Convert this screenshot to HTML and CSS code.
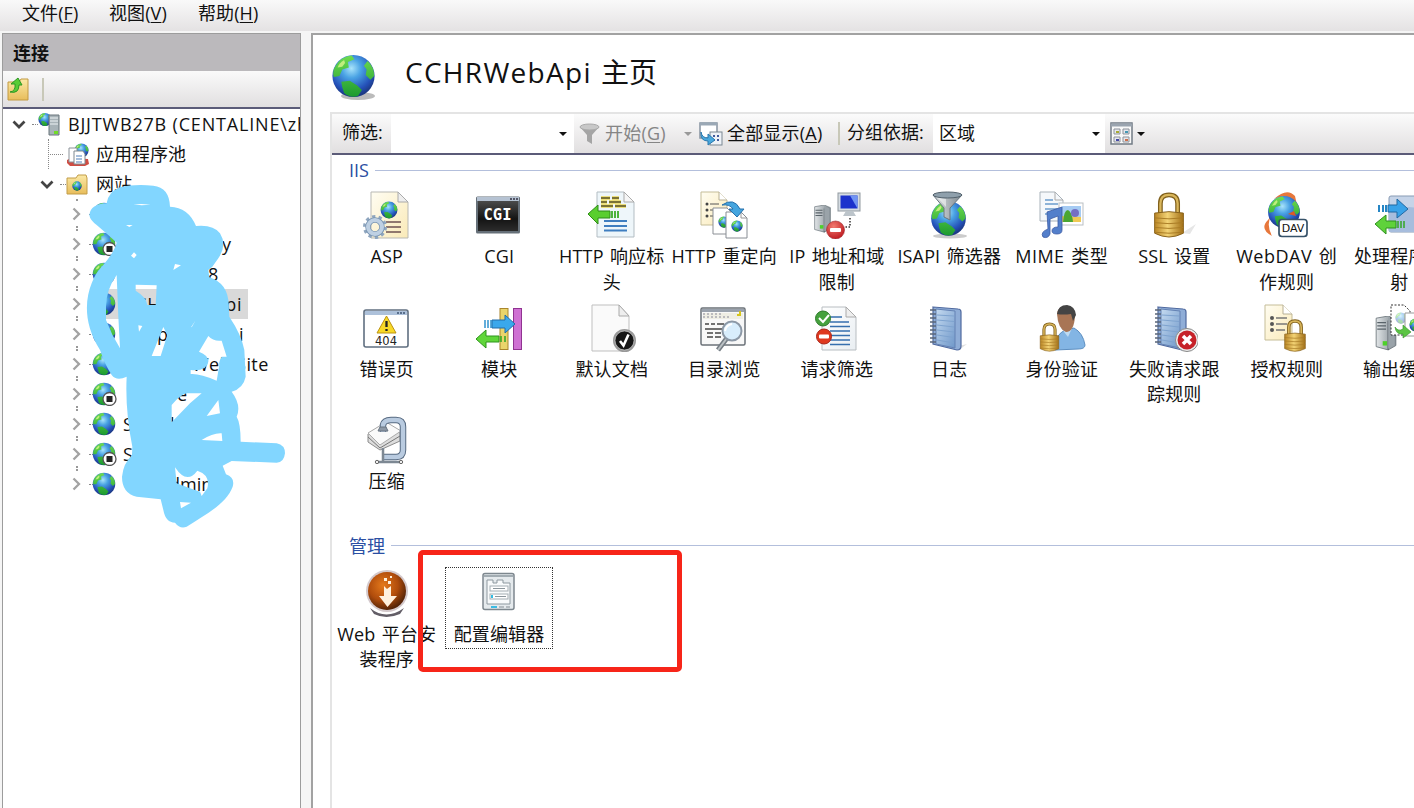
FILE: index.html
```html
<!DOCTYPE html>
<html lang="zh-CN">
<head>
<meta charset="utf-8">
<title>CCHRWebApi 主页</title>
<link rel="stylesheet" href="styles.css">
</head>
<body>
<svg class="sprite" width="0" height="0" aria-hidden="true">
  <defs>
    <radialGradient id="sea" cx=".45" cy=".32" r=".65"><stop offset="0" stop-color="#a9e4fa"/><stop offset=".35" stop-color="#4aa3e4"/><stop offset=".8" stop-color="#2450b8"/><stop offset="1" stop-color="#1d3a86"/></radialGradient>
    <linearGradient id="land" x1="0" y1="0" x2="0" y2="1"><stop offset="0" stop-color="#6fdc50"/><stop offset="1" stop-color="#1c9a30"/></linearGradient>
    <linearGradient id="gold" x1="0" y1="0" x2="1" y2="0"><stop offset="0" stop-color="#b98524"/><stop offset=".45" stop-color="#f3d375"/><stop offset="1" stop-color="#a26f16"/></linearGradient>
    <linearGradient id="steel" x1="0" y1="0" x2="1" y2="0"><stop offset="0" stop-color="#e2e6e8"/><stop offset="1" stop-color="#7d878e"/></linearGradient>
    <linearGradient id="paper" x1="0" y1="0" x2="1" y2="1"><stop offset="0" stop-color="#ffffff"/><stop offset="1" stop-color="#e9eef2"/></linearGradient>
    <linearGradient id="cream" x1="0" y1="0" x2="1" y2="1"><stop offset="0" stop-color="#fffdf2"/><stop offset="1" stop-color="#faeab8"/></linearGradient>
    <linearGradient id="folder" x1="0" y1="0" x2="0" y2="1"><stop offset="0" stop-color="#fbe9a6"/><stop offset="1" stop-color="#e8bd5b"/></linearGradient>
    <linearGradient id="dark" x1="0" y1="0" x2="0" y2="1"><stop offset="0" stop-color="#4a4a4a"/><stop offset=".6" stop-color="#141414"/><stop offset="1" stop-color="#2c2c2c"/></linearGradient>
    <linearGradient id="book" x1="0" y1="0" x2="1" y2="1"><stop offset="0" stop-color="#c4daf0"/><stop offset="1" stop-color="#6f97c9"/></linearGradient>
    <radialGradient id="red" cx=".4" cy=".3" r=".7"><stop offset="0" stop-color="#f27b70"/><stop offset="1" stop-color="#c01d22"/></radialGradient>
    <radialGradient id="orange" cx=".4" cy=".35" r=".65"><stop offset="0" stop-color="#e57a1c"/><stop offset=".6" stop-color="#b04c0c"/><stop offset="1" stop-color="#562508"/></radialGradient>
  </defs>

  <symbol id="globe" viewBox="0 0 48 48">
    <circle cx="24" cy="24" r="22.5" fill="url(#sea)"/>
    <path d="M5 13Q11 3 22 2l3 4-7 3 1 6-7 2-3 7-6 1Q1 19 5 13zM39 8q7 6 7 16l-4 4-5-5 1-6-3-4zM11 30l9-1 8 5 5 5-4 6q-8 3-15-3l-2-6z" fill="url(#land)"/>
    <path d="M14 7q-5 3-7 8l5-1 3-4z" fill="#d9f58a" opacity=".8"/>
  </symbol>

  <symbol id="lock" viewBox="0 0 34 48">
    <path d="M8 25V12q0-9 9-9t9 9v13" fill="none" stroke="#80601c" stroke-width="5"/>
    <path d="M8 25V12q0-9 9-9t9 9v13" fill="none" stroke="#d9b65b" stroke-width="2.4"/>
    <path d="M2 22l15-1.500 15 1.500v21q-8 4-15 4T2 43z" fill="url(#gold)" stroke="#86601a"/>
    <path d="M2 27l15 1 15-1M2 32l15 1 15-1M2 37l15 1 15-1M2 42l15 1 15-1" fill="none" stroke="#a87a24"/>
  </symbol>

  <symbol id="tower" viewBox="0 0 20 32">
    <path d="M1 2L12 0l7 3v24l-7 4L1 28z" fill="url(#steel)" stroke="#6f787e" stroke-width=".8"/>
    <path d="M12 4v27M2 6h8M2 9h8M2 12h8" fill="none" stroke="#59636a" stroke-width="1.200"/>
    <path d="M12 1l6 3v23l-6 3z" fill="#9aa3a9"/>
    <rect x="7" y="23" width="4" height="4" fill="#4ed02a"/>
  </symbol>

  <symbol id="notebook" viewBox="0 0 48 48">
    <path d="M30 43l12-3-8 6z" fill="#ccc" opacity=".6"/>
    <path d="M8 3l25 2q3 0 3 3v34q0 4-4 4L8 40z" fill="#8fadd7" stroke="#506a9f" stroke-width="1.200"/>
    <path d="M11 5l19 2v37l-19-4z" fill="url(#book)" stroke="#6482b4"/>
    <path d="M12 11l17 1M12 16l17 1.500M12 21l17 2M12 26l17 2M12 31l17 2.500M12 36l17 3" stroke="#7ea3cf"/>
    <path d="M5 6h6M5 10h6M5 14h6M5 18h6M5 22h6M5 26h6M5 30h6M5 34h6M5 38h6" stroke="#5a6578" stroke-width="1.500"/>
  </symbol>

  <symbol id="asp" viewBox="0 0 48 48">
    <path d="M8 1h27l10 10v36H8z" fill="url(#cream)" stroke="#b9b9b4"/><path d="M35 1v10h10z" fill="#eee" stroke="#aaa"/>
    <use href="#globe" x="17" y="10" width="18" height="18"/>
    <path d="M23 31h15M23 36h15M23 41h15" stroke="#6d5252" stroke-width="1.600"/>
    <circle cx="12" cy="36" r="10.500" fill="none" stroke="#8fa6bf" stroke-width="3" stroke-dasharray="3.300 3.300"/>
    <circle cx="12" cy="36" r="7" fill="none" stroke="#7793b1" stroke-width="5.500"/><circle cx="12" cy="36" r="7" fill="none" stroke="#bed0e3" stroke-width="4"/>
  </symbol>

  <symbol id="cgi" viewBox="0 0 48 48">
    <rect x="1" y="5.500" width="44" height="37" rx="1.500" fill="#667079"/><rect x="2" y="6" width="42" height="4" fill="#b5c2d2"/><path d="M35 8h8" stroke="#334" stroke-width="1.500" stroke-dasharray="2 1"/>
    <rect x="3" y="10" width="40" height="30" fill="url(#dark)"/>
    <text x="22.500" y="29" text-anchor="middle" class="cgi-text">CGI</text>
  </symbol>

  <symbol id="headers" viewBox="0 0 48 48">
    <path d="M9 1h27l10 10v35H9z" fill="#eef6fa" stroke="#b3bdc3"/><path d="M36 1v10h10z" fill="#f6f6f6" stroke="#aaa"/>
    <path d="M13 7h9m2 0h7M13 11h6m2 0h12M13 15h12m2 0h11" stroke="#ecdf7c" stroke-width="4"/><path d="M13 7h9m2 0h7M13 11h6m2 0h12M13 15h12m2 0h11" stroke="#55501f" stroke-width="1.400"/>
    <path d="M0 23l10-9v6h12v7H10v6z" fill="#5ace2f" stroke="#2f8c19"/><path d="M24 20v7M27 20v7M30 20v7" stroke="#32a91d" stroke-width="1.700"/>
    <path d="M16 30h23M16 35h23M16 39.500h23" stroke="#3f7ec0" stroke-width="1.800"/>
  </symbol>

  <symbol id="redirect" viewBox="0 0 48 48">
    <path d="M1 1h18l8 8v25H1z" fill="url(#cream)" stroke="#c5bd98"/><path d="M19 1v8h8" fill="#fff" stroke="#b8b095"/>
    <path d="M10 13h9M10 19h5M10 25h3" stroke="#555"/><circle cx="7" cy="13" r="1.500" fill="#444"/><circle cx="7" cy="19" r="1.500" fill="#444"/><circle cx="7" cy="25" r="1.500" fill="#444"/>
    <path d="M13 17h14l6 6v20H13z" fill="#fff" stroke="#8b8f95"/><use href="#globe" x="18" y="25" width="12" height="12"/>
    <path d="M26 21h15l6 6v20H26z" fill="#fff" stroke="#888d94"/><path d="M41 21v6h6" fill="none" stroke="#999"/><use href="#globe" x="31" y="29" width="12" height="12"/>
    <path d="M22 14q12-8 18 4h4l-7 8-8-8h4q-3-5-11-4z" fill="#45a5df" stroke="#2671ac"/>
  </symbol>

  <symbol id="iprestrict" viewBox="0 0 48 48">
    <use href="#tower" x="0" y="14" width="19" height="28"/>
    <rect x="25" y="2" width="22" height="18" fill="#d5dce2" stroke="#91999f"/><rect x="27.500" y="4.500" width="17" height="13" fill="#1c32cc"/><path d="M37 4.500h7.500v13z" fill="#7195f3"/><path d="M33 20h7l3 5H30z" fill="#bcc4ca"/>
    <path d="M37 27v9h-5" fill="none" stroke="#333" stroke-width="1.500" stroke-dasharray="1.500 1.500"/>
    <circle cx="22.500" cy="39" r="9" fill="url(#red)" stroke="#9d262b" stroke-width=".6"/><rect x="17" y="37" width="11" height="4" rx="1" fill="#fff"/>
  </symbol>

  <symbol id="isapi" viewBox="0 0 48 48">
    <ellipse cx="25" cy="45" rx="17" ry="2.500" fill="#ccc"/><use href="#globe" x="5" y="9" width="37" height="37"/>
    <path d="M8 4l11 13v9l6 3V17L37 4z" fill="url(#steel)" stroke="#68757f"/><path d="M12 6l9 10V8z" fill="#fff" opacity=".5"/><ellipse cx="22.500" cy="4" rx="14.500" ry="3" fill="#8fa0ac" stroke="#52616c"/>
  </symbol>

  <symbol id="mime" viewBox="0 0 48 48">
    <path d="M2 1h15l8 8v21H2z" fill="#f5f8fb" stroke="#a9b2ba"/><path d="M17 1v8h8" fill="none" stroke="#aaa"/><path d="M7 9h8M7 13h13M7 18h12M7 23h10" stroke="#6b9ccd" stroke-width="1.300"/>
    <rect x="21" y="12" width="24" height="22" fill="#fff" stroke="#babfc3"/><path d="M24 15h19v16H24z" fill="#a5cbf3"/><path d="M24 25l19 1v5H24z" fill="#efc954"/><path d="M25 31q1-12 5-12 4 2 5 12z" fill="#4aa632"/><circle cx="37" cy="22" r="4" fill="#746fc4"/>
    <path d="M9 21l15-5v23q0 4-5 4t-5-3q0-4 6-4V25l-8 3v15q-2 5-7 3-3-5 5-8z" fill="#537fcb" stroke="#3b5aa3" stroke-width=".8"/>
  </symbol>

  <symbol id="ssl" viewBox="0 0 48 48"><path d="M32 42l14-9-6 10z" fill="#e6e6e6"/><use href="#lock" x="2" y="1" width="34" height="46"/></symbol>

  <symbol id="webdav" viewBox="0 0 48 48">
    <path d="M5 29Q-4 38 9 45q-6-11-1-20M11 8Q24-4 32 5l4 18-7-8Q27 1 11 8" fill="#e7773b"/><use href="#globe" x="4" y="3" width="34" height="36"/>
    <path d="M25 23l8 2-2-5z" fill="#dd5a24"/><rect x="16" y="28.500" width="28" height="17" rx="3" fill="#fff" stroke="#365269" stroke-width="1.700"/><text x="30" y="41" text-anchor="middle" class="dav-text">DAV</text>
  </symbol>

  <symbol id="handler" viewBox="0 0 48 48">
    <rect x="14" y="5" width="38" height="36" rx="2" fill="#c6d4e8" stroke="#889bb4"/><path d="M14 22q20-12 38 0v19H14z" fill="#a7bddd"/>
    <path d="M13 14h9V8l11 10-11 9v-6h-9z" fill="#39a2e8" stroke="#2168a2"/><path d="M4 14v7M8 14v7M11 14v7" stroke="#2686c5" stroke-width="2"/>
    <path d="M0 33l11-9v6h10v7H11v6z" fill="#5fd23b" stroke="#2e911e"/><path d="M23 30v7M26 30v7M29 30v7" stroke="#35a624" stroke-width="1.500"/>
  </symbol>

  <symbol id="error404" viewBox="0 0 48 48">
    <rect x="1" y="6" width="44" height="37" rx="2" fill="#fff" stroke="#606f80" stroke-width="1.600"/><path d="M2 7h42v4H2z" fill="#adc1da"/><path d="M34 9h9" stroke="#3e5473" stroke-width="1.500" stroke-dasharray="2 1"/>
    <path d="M23.500 12L33 29H14z" fill="#f8d928" stroke="#bc9311" stroke-linejoin="round"/><path d="M23.500 17v6M23.500 25v2" stroke="#222" stroke-width="2.300"/>
    <text x="23" y="40.500" text-anchor="middle" class="error-text">404</text>
  </symbol>

  <symbol id="modules" viewBox="0 0 48 48">
    <rect x="25" y="4.500" width="8" height="41" fill="#ead56b" stroke="#aa862c"/><rect x="38.500" y="4.500" width="8" height="41" fill="#cf71d3" stroke="#903391"/>
    <path d="M17 16h13v-5l10 9-10 9v-5H17z" fill="#3aa8ec" stroke="#246da7"/><path d="M10 16v8M13 16v8M16 16v8" stroke="#218bcb" stroke-width="1.400"/>
    <path d="M1 35l10-9v6h13v6H11v6z" fill="#60d63a" stroke="#2e951c"/><path d="M26 32v6M30 32v6" stroke="#39a927" stroke-width="1.600"/>
  </symbol>

  <symbol id="defaultdoc" viewBox="0 0 48 48">
    <path d="M4 1h27l10 11v35H4z" fill="#fafafa" stroke="#bfbfbf"/><path d="M31 1v11h10z" fill="#eee" stroke="#aaa"/><circle cx="36.500" cy="36.500" r="10.500" fill="#161616" stroke="#999" stroke-width="2"/><circle cx="36.500" cy="36.500" r="9.500" fill="none" stroke="#ddd" stroke-width=".6"/><path d="M32 37l3.500 4.500 5-11" fill="none" stroke="#fff" stroke-width="2.600"/>
  </symbol>

  <symbol id="browse" viewBox="0 0 48 48">
    <rect x="1" y="4" width="44" height="37" rx="1.500" fill="#f8f8f8" stroke="#6b7178" stroke-width="1.500"/><path d="M2 5h42v3H2z" fill="#9aa2ad"/><path d="M3 9h40v6H3z" fill="#efeee4"/><path d="M3 10h18M3 13h27" stroke="#889" stroke-dasharray="2 2"/><path d="M40 7v4h-3" stroke="#d5c51c" stroke-width="2" fill="none"/>
    <path d="M5 20h4m2 0h4m2 0h7M5 25h18M7 29h6m2 0h6M7 33h6m2 0h6" stroke="#444" stroke-width="1.500"/>
    <path d="M27 34L18 46" stroke="#747c83" stroke-width="5"/><path d="M27 34L18 46" stroke="#bbc1c4" stroke-width="2"/><circle cx="32" cy="27" r="9.500" fill="#d8edfc" stroke="#8c98a6" stroke-width="2"/><path d="M25 27q1-6 7-7" fill="none" stroke="#fff" stroke-width="2"/>
  </symbol>

  <symbol id="requestfilter" viewBox="0 0 48 48">
    <path d="M9 3h24l10 10v33H9z" fill="url(#paper)" stroke="#b8bdc1"/><path d="M33 3v10h10z" fill="#eee" stroke="#aaa"/><path d="M17 13h12M17 18h19M17 22.500h20M17 27h20M17 31.500h20M17 36h20M17 40.500h20" stroke="#366fae" stroke-width="1.600"/>
    <circle cx="10" cy="14.500" r="7.500" fill="#45a13d" stroke="#2f7b2c"/><path d="M6 14l4 4 6-7" fill="none" stroke="#fff" stroke-width="2"/><circle cx="11" cy="32.500" r="7.500" fill="#df381e" stroke="#a92519"/><rect x="6" y="30.500" width="10" height="4" rx="1" fill="#fff"/>
  </symbol>

  <symbol id="auth" viewBox="0 0 48 48">
    <path d="M17 46q0-18 12-20l7-2q9 5 11 17 0 4-7 4z" fill="#83b5e4" stroke="#5d8fc1"/><path d="M23 24l7 9 5-11z" fill="#bedbf2"/><path d="M19 10q1-8 9-8 9 1 9 10-1 16-9 16-8-3-9-18z" fill="#a87555"/><path d="M19 10Q20 1 29 1q8 1 9 10l-3 6-2-7q-8 1-14 0z" fill="#444"/><use href="#lock" x="1" y="18" width="21" height="30"/>
  </symbol>

  <symbol id="failed" viewBox="0 0 48 48"><use href="#notebook" width="48" height="48"/><circle cx="37" cy="36" r="11.500" fill="#ececec" stroke="#888"/><circle cx="37" cy="36" r="9.500" fill="#c62229"/><path d="M33 32l8 8M41 32l-8 8" stroke="#fff" stroke-width="3.500"/></symbol>
  <symbol id="authorize" viewBox="0 0 48 48"><path d="M2 1h18l9 9v26H2z" fill="url(#cream)" stroke="#c5bd98"/><path d="M20 1v9h9" fill="#fff" stroke="#b8b095"/><path d="M13 14h11M13 20h11M13 26h9" stroke="#777" stroke-width="1.500"/><circle cx="9" cy="14" r="2" fill="#555"/><circle cx="9" cy="20" r="2" fill="#555"/><circle cx="9" cy="26" r="2" fill="#555"/><use href="#lock" x="20" y="15" width="24" height="33"/></symbol>
  <symbol id="outputcache" viewBox="0 0 48 48"><use href="#tower" x="0" y="12" width="22" height="35"/><path d="M16 1h13l6 6v24H16z" fill="#fff" stroke="#333" stroke-dasharray="2 1.500"/><use href="#globe" x="20" y="8" width="12" height="12" opacity=".4"/><path d="M30 9h18v23H30z" fill="#fff" stroke="#999"/><use href="#globe" x="34" y="14" width="14" height="14"/><path d="M20 23q3 5 8 2v-4l8 7-8 6v-4q-7 1-8-7z" fill="#5bc443" stroke="#34902a" stroke-width=".6"/></symbol>
  <symbol id="compress" viewBox="0 0 48 48">
    <path d="M5 18l17-11 15 10v8L17 34 5 26z" fill="#ddd" stroke="#8c8c8c"/><path d="M5 17l18-11 15 9-21 14z" fill="#fafafa" stroke="#aaa"/><path d="M5 21l12 11 20-12" fill="none" stroke="#777"/>
    <path d="M20 16V9q1-5 8-5h5q7 0 7 7v23q0 7-7 7H21" fill="none" stroke="#586b82" stroke-width="6.500"/><path d="M20 16V9q1-5 8-5h5q7 0 7 7v23q0 7-7 7H21" fill="none" stroke="#b9cbe0" stroke-width="4.500"/>
    <path d="M15 15h10l-2-4h-6z" fill="#8d98a5" stroke="#697582"/><path d="M20 32v14M13 46h25" stroke="#7d8893" stroke-width="2.500"/><circle cx="14" cy="46" r="1.700" fill="#eee" stroke="#666"/><circle cx="38" cy="46" r="1.700" fill="#eee" stroke="#666"/>
  </symbol>
  <symbol id="webplatform" viewBox="0 0 48 48"><path d="M7 39q16 13 34 0l-4 6q-14 6-26 0z" fill="#625d66"/><circle cx="24" cy="22" r="21" fill="#d4c9cc"/><circle cx="24" cy="22" r="19" fill="url(#orange)"/><path d="M21 17l3 3 4-3v10h6L24.500 38 16 27h5zM21 9h3v3h-3zM25 12h3v3h-3zM27 7h2v2h-2z" fill="#fff1de"/></symbol>
  <symbol id="config" viewBox="0 0 48 48"><rect x="8" y="4.500" width="31" height="36" rx="2" fill="#e5eaed" stroke="#7d878e" stroke-width="1.500"/><path d="M9 7h29" stroke="#a2acb2" stroke-width="2"/><path d="M12 11h6v3h4v-3h6v3h7v21H12z" fill="#f8fafb" stroke="#8d989f"/><rect x="15" y="17" width="18" height="5" fill="#fff" stroke="#a4adb3"/><rect x="15" y="25" width="18" height="5" fill="#fff" stroke="#a4adb3"/><path d="M18 19.500h12M20 27.500h11" stroke="#8c969c"/><path d="M17 26v3" stroke="#33bde2" stroke-width="2"/><path d="M16 38h6" stroke="#3cbbe3" stroke-width="2"/><path d="M24 38h5M31 38h4" stroke="#b4bbc0" stroke-width="2"/></symbol>

  <symbol id="stopped" viewBox="0 0 26 24"><use href="#globe" width="24" height="24"/><circle cx="17.500" cy="17" r="6.500" fill="#fff" stroke="#555" stroke-width="1.300"/><rect x="14.500" y="14" width="6" height="6" fill="#252525"/></symbol>
  <symbol id="site" viewBox="0 0 26 24"><use href="#globe" width="24" height="24"/></symbol>
  <symbol id="down" viewBox="0 0 14 9"><path d="M1.500 1.500L7 7l5.500-5.500" fill="none" stroke="#444" stroke-width="2.700"/></symbol>
  <symbol id="right" viewBox="0 0 9 14"><path d="M1.500 1.500L7 7l-5.500 5.500" fill="none" stroke="#a3a3a3" stroke-width="2.300"/></symbol>
</svg>

<nav class="menu"><span>文件(<u>F</u>)</span><span>视图(<u>V</u>)</span><span>帮助(<u>H</u>)</span></nav>

<div class="workspace">
  <aside class="connections">
    <h2 class="pane-title">连接</h2>
    <div class="pane-tools">
      <svg width="22" height="24" viewBox="0 0 22 24"><path d="M1 5h11l2-3h7v21H1z" fill="url(#folder)" stroke="#c29a43"/><path d="M3 15q6-1 5-8H4l7-6 4 7h-3q0 9-9 7z" fill="#58cc35" stroke="#2c9623"/></svg>
      <i class="divider"></i>
    </div>
    <div class="tree">
      <div class="node root">
        <svg class="expander" width="14" height="9"><use href="#down"/></svg><i class="link"></i>
        <svg width="23" height="25" viewBox="0 0 23 25"><use href="#globe" width="14" height="15"/><path d="M11 3h10v20H11z" fill="#a8b3b8" stroke="#68747b"/><path d="M12 6h8M12 9h8M12 12h8" stroke="#eef3f5"/><path d="M16 19h4v3h-4z" fill="#70dc27"/></svg>
        <span class="root-name">BJJTWB27B (CENTALINE\zh</span>
      </div>
      <div class="node pool"><i class="link"></i>
        <svg width="24" height="25" viewBox="0 0 24 25"><use href="#globe" x="8" y="1" width="15" height="15"/><path d="M1 18l4-2 17 1 1 5-4 2H4l-3-3z" fill="#cf4c42"/><path d="M3 6h8v14H3z" fill="#fff" stroke="#8b9299"/><path d="M8 9h9l2 3v10H8z" fill="#fff" stroke="#7f8990"/><path d="M10 14h6M10 17h6M10 20h6" stroke="#4f7eb8"/></svg><span>应用程序池</span>
      </div>
      <div class="node sites">
        <svg class="expander" width="14" height="9"><use href="#down"/></svg><i class="link"></i>
        <svg width="22" height="21" viewBox="0 0 22 21"><path d="M1 4h9l2-3h8l1 3v16H1z" fill="url(#folder)" stroke="#c29d49"/><use href="#globe" x="6" y="7" width="10" height="10"/></svg><span>网站</span>
      </div>
      <div class="node site"><svg class="expander" width="9" height="14"><use href="#right"/></svg><i class="link"></i><svg class="globe" width="26" height="24"><use href="#site"/></svg></div>
      <div class="node site"><svg class="expander" width="9" height="14"><use href="#right"/></svg><i class="link"></i><svg class="globe" width="26" height="24"><use href="#stopped"/></svg><span class="tail-y">y</span></div>
      <div class="node site"><svg class="expander" width="9" height="14"><use href="#right"/></svg><i class="link"></i><svg class="globe" width="26" height="24"><use href="#site"/></svg><span class="tail-b">8</span></div>
      <div class="node site"><svg class="expander" width="9" height="14"><use href="#right"/></svg><i class="link"></i><span class="selected"><svg width="26" height="24"><use href="#site"/></svg><span class="selected-name">CCHRWebApi</span></span></div>
      <div class="node site"><svg class="expander" width="9" height="14"><use href="#right"/></svg><i class="link"></i><svg class="globe" width="26" height="24"><use href="#site"/></svg><span class="tail-p">p</span><span class="tail-pi">pi</span></div>
      <div class="node site"><svg class="expander" width="9" height="14"><use href="#right"/></svg><i class="link"></i><svg class="globe" width="26" height="24"><use href="#site"/></svg><span class="name default-site">Default Web Site</span></div>
      <div class="node site"><svg class="expander" width="9" height="14"><use href="#right"/></svg><i class="link"></i><svg class="globe" width="26" height="24"><use href="#stopped"/></svg><span class="tail-e">e</span></div>
      <div class="node site"><svg class="expander" width="9" height="14"><use href="#right"/></svg><i class="link"></i><svg class="globe" width="26" height="24"><use href="#site"/></svg><span class="name">S</span><span class="tail-l">l</span></div>
      <div class="node site"><svg class="expander" width="9" height="14"><use href="#right"/></svg><i class="link"></i><svg class="globe" width="26" height="24"><use href="#stopped"/></svg><span class="name">S</span></div>
      <div class="node site last"><svg class="expander" width="9" height="14"><use href="#right"/></svg><i class="link"></i><svg class="globe" width="26" height="24"><use href="#site"/></svg><span class="tail-admin">dmin</span></div>
    </div>
  </aside>

  <main class="feature-view">
    <header class="heading"><svg width="46" height="48" viewBox="0 0 46 48"><ellipse cx="27" cy="43" rx="17" ry="4" fill="#bbb"/><use href="#globe" x="0" y="0" width="45" height="46"/></svg><h1><span class="heading-name">CCHRWebApi</span> 主页</h1></header>
    <div class="features">
      <div class="toolbar">
        <label class="filter-label">筛选:</label><div class="combo filter"><i class="arrow"></i></div>
        <button class="tool start"><svg width="22" height="22" viewBox="0 0 22 22"><path d="M1 4l7 8v6l5 3V12l7-8z" fill="#a5a5a5"/><ellipse cx="10.500" cy="4" rx="9.500" ry="3" fill="#c8c8c8" stroke="#aaa"/></svg><span>开始(<u>G</u>)</span><i class="arrow muted"></i></button>
        <button class="tool show"><svg width="24" height="24" viewBox="0 0 24 24"><rect x="1" y="1" width="17" height="15" fill="#fff" stroke="#8793a0" stroke-width="1.500"/><path d="M1 2h17" stroke="#9aa8b5" stroke-width="3"/><rect x="11" y="10" width="12" height="13" fill="#eef2f7" stroke="#7b8792"/><path d="M14 14h2m2 0h2M14 18h2m2 0h2" stroke="#445b9b" stroke-width="2"/><path d="M2 10q1 6 7 6v-4l7 6-7 5v-4Q1 19 2 10z" fill="#4ba9dd" stroke="#2b79af"/></svg><span>全部显示(<u>A</u>)</span></button>
        <i class="divider"></i><label class="group-label">分组依据:</label><div class="combo group"><span>区域</span><i class="arrow"></i></div>
        <button class="tool layout"><svg width="23" height="23" viewBox="0 0 23 23"><rect x="1" y="1" width="21" height="21" fill="#f8f8f8" stroke="#727b85" stroke-width="1.500"/><path d="M1 3h21" stroke="#9aa4af" stroke-width="3"/><path d="M4 7h6v5H4zM13 7h6v5h-6zM4 15h6v5H4zM13 15h6v5h-6z" fill="#e5e7ed" stroke="#8d929a"/><path d="M6 9h3v2H6z" fill="#a8aa31"/><path d="M15 9h3v2h-3z" fill="#4498b4"/><path d="M6 17h3v2H6z" fill="#4548a6"/><path d="M15 17h3v2h-3z" fill="#ce704b"/></svg><i class="arrow"></i></button>
      </div>
      <section>
        <h3 class="section-title"><span>IIS</span></h3>
        <div class="grid">
          <div class="feature"><svg><use href="#asp"/></svg><p>ASP</p></div>
          <div class="feature"><svg><use href="#cgi"/></svg><p>CGI</p></div>
          <div class="feature"><svg><use href="#headers"/></svg><p>HTTP 响应标<br>头</p></div>
          <div class="feature"><svg><use href="#redirect"/></svg><p>HTTP 重定向</p></div>
          <div class="feature"><svg><use href="#iprestrict"/></svg><p>IP 地址和域<br>限制</p></div>
          <div class="feature"><svg><use href="#isapi"/></svg><p>ISAPI 筛选器</p></div>
          <div class="feature"><svg><use href="#mime"/></svg><p class="wide">MIME 类型</p></div>
          <div class="feature"><svg><use href="#ssl"/></svg><p>SSL 设置</p></div>
          <div class="feature"><svg><use href="#webdav"/></svg><p class="wide">WebDAV 创<br>作规则</p></div>
          <div class="feature"><svg><use href="#handler"/></svg><p>处理程序映<br>射</p></div>
          <div class="feature"><svg><use href="#error404"/></svg><p>错误页</p></div>
          <div class="feature"><svg><use href="#modules"/></svg><p>模块</p></div>
          <div class="feature"><svg><use href="#defaultdoc"/></svg><p>默认文档</p></div>
          <div class="feature"><svg><use href="#browse"/></svg><p>目录浏览</p></div>
          <div class="feature"><svg><use href="#requestfilter"/></svg><p>请求筛选</p></div>
          <div class="feature"><svg><use href="#notebook"/></svg><p>日志</p></div>
          <div class="feature"><svg><use href="#auth"/></svg><p>身份验证</p></div>
          <div class="feature"><svg><use href="#failed"/></svg><p>失败请求跟<br>踪规则</p></div>
          <div class="feature"><svg><use href="#authorize"/></svg><p>授权规则</p></div>
          <div class="feature"><svg><use href="#outputcache"/></svg><p>输出缓存</p></div>
          <div class="feature"><svg><use href="#compress"/></svg><p>压缩</p></div>
        </div>
      </section>
      <section class="management">
        <h3 class="section-title"><span>管理</span></h3>
        <div class="grid">
          <div class="feature"><svg><use href="#webplatform"/></svg><p>Web 平台安<br>装程序</p></div>
          <div class="feature focused"><svg><use href="#config"/></svg><p>配置编辑器</p></div>
        </div>
      </section>
    </div>
  </main>
</div>

<svg class="scribble" width="310" height="540" viewBox="0 0 930 1620" aria-hidden="true">
  <path fill="#82d6ff" fill-rule="evenodd" d="M268 645Q272 612 320 610Q325 575 360 562Q400 552 460 557Q508 562 510 620Q565 622 588 678Q640 673 660 700Q682 735 655 775L637 800L625 810L628 832Q685 850 686 915L688 950Q725 1005 733 1050L737 1130Q730 1165 695 1175Q725 1215 710 1250Q722 1270 722 1325L830 1330Q855 1335 855 1360Q852 1388 830 1388L695 1383L668 1397L678 1423Q706 1433 698 1460C680 1510 620 1542 560 1580Q540 1588 525 1568Q497 1568 490 1530L482 1498L410 1490Q366 1480 366 1430Q370 1390 396 1365L397 1340Q375 1230 380 1130Q350 1145 335 1125Q315 1095 300 1050C250 970 255 900 275 850Q285 820 310 795Q342 757 350 728Q325 705 290 675Q270 660 268 645Z
    M350 825Q318 870 318 920V960Q335 1005 360 1045L355 950Z
    M400 613L425 612L452 614L425 616Z M378 675H398L388 681Z M393 767L402 757L410 765L402 775Z M525 792L543 796L520 810Z
    M407 854L470 856L467 915H442Q440 892 407 872Z M415 976L427 978L417 995Z M490 981L502 1005L482 1068H455Z M573 982L586 962L576 980Z
    M625 1008Q640 1025 665 1022L680 1070H665Q655 1085 658 1095L650 1142Q600 1120 572 1122V1110Q620 1115 625 1085Q625 1065 597 1055Z
    M515 1215Q540 1185 560 1180H605L570 1210L515 1267Z M655 1200L660 1240L620 1248Z M605 1320Q640 1298 665 1300L667 1323Z
    M525 1402Q560 1455 592 1412Q632 1425 622 1465L605 1488L600 1475L570 1465L530 1450Z M540 1506L573 1508L543 1525Z"/>
</svg>
<div class="highlight"></div>
</body>
</html>
```
FILE: styles.css
```css
* { box-sizing: border-box; }

body {
  margin: 0;
  height: 808px;
  overflow: hidden;
  position: relative;
  display: flex;
  flex-direction: column;
  background: #f5f5f5;
  color: #111;
  font: 18px/26px "Open Sans", "Noto Sans CJK SC", sans-serif;
  white-space: nowrap;
}

svg { display: block; flex: none; }
u { text-underline-offset: 2px; text-decoration-thickness: 1px; }
.sprite { position: absolute; }

.menu {
  height: 31px;
  flex: none;
  display: flex;
  gap: 30px;
  padding-left: 22px;
  background: linear-gradient(#f9f9f9, #e4e2e3);
}
.menu span { width: 59px; letter-spacing: .1px; }
.menu span:first-child { width: 57px; }

.workspace {
  flex: 1;
  min-height: 0;
  display: flex;
  gap: 10px;
  padding: 2px 0 0 2px;
}

.connections {
  width: 299px;
  flex: none;
  overflow: hidden;
  background: #fff;
  border: 1px solid #9c9c9c;
  border-bottom: 0;
}
.pane-title {
  margin: 0;
  height: 37px;
  padding: 6px 10px;
  font-size: 18px;
  font-weight: 700;
  background: #bbb9bc;
}
.pane-tools {
  height: 38px;
  display: flex;
  align-items: center;
  gap: 13px;
  padding-left: 4px;
  background: linear-gradient(#fafafa, #e1dfe0);
  border-bottom: 2px solid #5b5b78;
}
.divider { width: 2px; height: 23px; background: #c8c8b8; flex: none; }

.node { height: 30px; display: flex; align-items: center; }
.node .link { width: 6px; height: 0; border-top: 1.500px dotted #888; flex: none; }
.root { padding-left: 9px; }
.root .link { margin: 0 0 0 6px; }
.root-name { margin-left: 7px; letter-spacing: .82px; }
.pool { margin-left: 45px; border-left: 1px dotted #888; }
.pool .link { width: 13px; margin: 0 3px 0 1px; }
.pool span { margin-left: 6px; }
.sites { padding-left: 37px; }
.sites .link { margin: 0 0 0 6px; }
.sites span { margin-left: 8px; }
.site {
  padding-left: 69px;
  background:
    linear-gradient(#999, #999) 73px 0 / 2px 2px no-repeat,
    linear-gradient(#999, #999) 73px 27px / 2px 2px no-repeat;
}
.site.last { background: linear-gradient(#999, #999) 73px 0 / 2px 2px no-repeat; }
.site .link { margin: 0 0 0 8px; }
.globe { margin-left: -3px; }
.name { margin-left: 5px; }
.default-site { letter-spacing: .4px; }
.selected {
  display: flex;
  align-items: center;
  height: 30px;
  width: 156px;
  margin-left: -3px;
  background: linear-gradient(#d9d9d9, #d9d9d9) 13px 0 no-repeat;
}
.selected-name { margin-left: 5px; letter-spacing: .75px; }
.tail-y { margin-left: 104px; }
.tail-b { margin-left: 90px; }
.tail-p { margin-left: 39px; }
.tail-pi { margin-left: 60px; }
.tail-e { margin-left: 59px; }
.tail-l { margin-left: 37px; }
.tail-admin { margin-left: 51px; }

.feature-view {
  flex: 1;
  min-width: 0;
  display: flex;
  flex-direction: column;
  background: #fff;
  border: 2px solid #a2a2a2;
  border-width: 2px 0 0 2px;
  padding-left: 18px;
}
.heading { height: 77px; flex: none; display: flex; align-items: flex-start; padding-top: 18px; }
.heading h1 { margin: 0 0 0 28px; font-size: 28px; font-weight: 400; line-height: 38px; word-spacing: 2px; }
.heading-name { letter-spacing: 1.300px; }

.features { flex: 1; border: 2px solid #e4e4e4; border-right: 0; border-bottom: 0; margin-left: -1px; }
.toolbar {
  height: 41px;
  display: flex;
  align-items: stretch;
  line-height: 37px;
  background: linear-gradient(#fbfbfb, #e1dfe0);
  border-bottom: 2px solid #5b5b78;
}
.toolbar .divider { align-self: center; }
.filter-label { width: 59px; padding-left: 10px; }
.combo { display: flex; align-items: center; justify-content: flex-end; background: #fff; }
.filter { width: 183px; padding-right: 7px; }
.arrow { border: 4.500px solid transparent; border-top-color: #111; border-bottom: 0; flex: none; }
.arrow.muted { border-top-color: #999; border-width: 4px 4px 0; margin-left: auto; }
.tool { border: 0; padding: 0; background: none; font: inherit; color: inherit; display: flex; align-items: center; }
.start { width: 113px; padding-left: 5px; color: #858585; }
.start span { margin-left: 4px; letter-spacing: .2px; }
.start .arrow { margin-right: -5px; }
.show { width: 151px; padding-left: 12px; }
.show span { margin-left: 4px; letter-spacing: .2px; }
.group-label { width: 93px; padding-left: 7px; }
.group { width: 172px; justify-content: space-between; padding: 0 5px 0 6px; }
.layout { padding-left: 5px; gap: 4px; }

.section-title {
  margin: 0;
  height: 36px;
  display: flex;
  align-items: center;
  gap: 6px;
  padding: 0 0 6px 17px;
  color: #2b4fa3;
  font-size: 18px;
  font-weight: 400;
}
.section-title::after { content: ""; flex: 1; height: 1px; background: #b3bfdc; }
.grid {
  display: grid;
  grid-template-columns: repeat(10, 112.500px);
  grid-auto-rows: 112.500px;
  margin-left: -1.500px;
}
.feature { display: flex; flex-direction: column; align-items: center; }
.feature svg { width: 48px; height: 48px; }
.feature p { margin: 5px 0 0; line-height: 25.500px; text-align: center; letter-spacing: .15px; word-spacing: 1.500px; }
.feature .wide { letter-spacing: .5px; }
.management .section-title { height: 40px; }
.focused {
  width: 108px;
  height: 82px;
  margin: -2px 0 0 2px;
  padding-top: 2px;
  outline: 1.500px dotted #333;
  outline-offset: -1px;
}
.cgi-text { font: 700 15.500px "DejaVu Sans Mono", monospace; fill: #fff; }
.dav-text { font: 400 11px "DejaVu Sans", sans-serif; fill: #111; }
.error-text { font: 400 11.500px "DejaVu Sans", sans-serif; fill: #222; }

.scribble { position: absolute; left: 0; top: 0; }
.highlight {
  position: absolute;
  left: 418px;
  top: 550px;
  width: 264px;
  height: 122px;
  border: 5px solid #f72519;
  border-radius: 5px;
}
```
